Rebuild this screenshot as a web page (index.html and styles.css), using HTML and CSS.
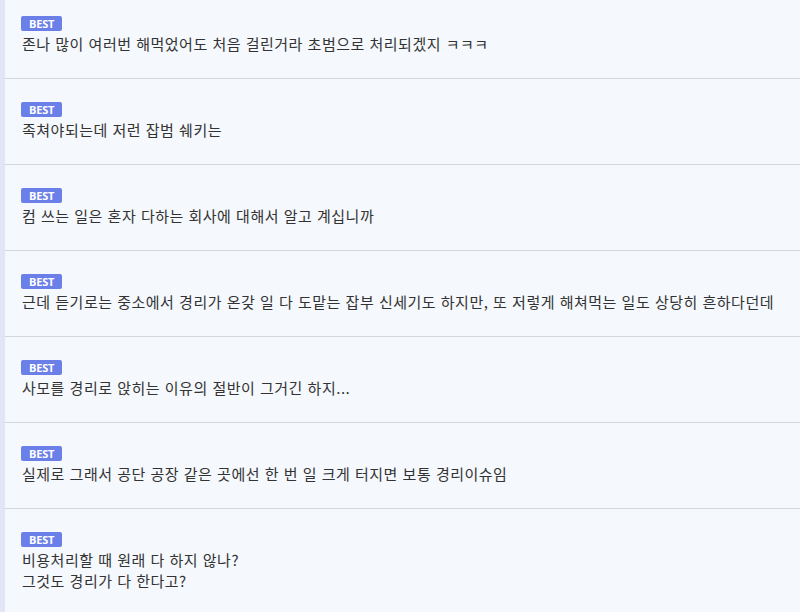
FILE: index.html
```html
<!DOCTYPE html>
<html lang="ko">
<head>
    <meta charset="UTF-8">
    <meta name="viewport" content="width=device-width, initial-scale=1.0">
    <title>베스트 댓글</title>
    <link rel="stylesheet" href="styles.css">
</head>
<body>
    <!-- Best comments -->
    <main class="comments">
        <div class="comment">
            <span class="badge">BEST</span>
            <p class="comment-text">존나 많이 여러번 해먹었어도 처음 걸린거라 초범으로 처리되겠지 ㅋㅋㅋ</p>
        </div>
        <div class="comment">
            <span class="badge">BEST</span>
            <p class="comment-text">족쳐야되는데 저런 잡범 쉐키는</p>
        </div>
        <div class="comment">
            <span class="badge">BEST</span>
            <p class="comment-text">컴 쓰는 일은 혼자 다하는 회사에 대해서 알고 계십니까</p>
        </div>
        <div class="comment">
            <span class="badge">BEST</span>
            <p class="comment-text">근데 듣기로는 중소에서 경리가 온갖 일 다 도맡는 잡부 신세기도 하지만, 또 저렇게 해쳐먹는 일도 상당히 흔하다던데</p>
        </div>
        <div class="comment">
            <span class="badge">BEST</span>
            <p class="comment-text">사모를 경리로 앉히는 이유의 절반이 그거긴 하지...</p>
        </div>
        <div class="comment">
            <span class="badge">BEST</span>
            <p class="comment-text">실제로 그래서 공단 공장 같은 곳에선 한 번 일 크게 터지면 보통 경리이슈임</p>
        </div>
        <div class="comment">
            <span class="badge">BEST</span>
            <p class="comment-text">비용처리할 때 원래 다 하지 않나?<br>그것도 경리가 다 한다고?</p>
        </div>
    </main>
</body>
</html>
```

FILE: styles.css
```css
/* General Styles */
body {
    background-color: #f5f8fc;
    color: #333333;
    font-family: "Noto Sans CJK KR", "Noto Sans", sans-serif;
    margin: 0;
    padding: 0;
    overflow: hidden;
}

.comments {
    border-left: 5px solid #e1e5f5;
    min-height: 612px;
}

.comment {
    display: flex;
    flex-direction: column;
    align-items: flex-start;
    padding: 23px 16px 24px 16px;
    border-bottom: 1px solid #d3d7dc;
}

.comment:first-child {
    padding-top: 16px;
}

.badge {
    display: block;
    height: 15px;
    padding: 0 8px;
    background-color: #6b7fe8;
    border-radius: 2px;
    color: #ffffff;
    font-family: "Open Sans", sans-serif;
    font-size: 11px;
    font-weight: 700;
    line-height: 15px;
    letter-spacing: -0.2px;
}

.comment-text {
    margin: 2px 0 0 1px;
    font-size: 15px;
    letter-spacing: 0.5px;
    line-height: 21px;
}
```
